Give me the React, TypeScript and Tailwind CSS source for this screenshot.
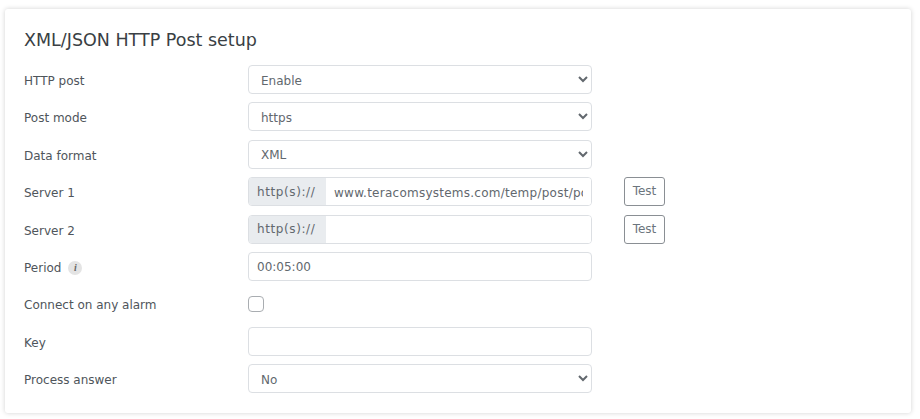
const fieldClass =
  "h-[29px] w-[344px] rounded-[4px] border border-[#dcdfe3] bg-white pt-[2px] text-[12px] text-[#62686e] outline-none";

const Label = ({ children }: { children: React.ReactNode }) => (
  <div className="w-[224px] shrink-0 pt-[3px] text-[12px] text-[#4f555b]">{children}</div>
);

const Row = ({ children }: { children: React.ReactNode }) => (
  <div className="flex h-[29px] items-center">{children}</div>
);

const SelectRow = ({ label, value }: { label: string; value: string }) => (
  <Row>
    <Label>{label}</Label>
    <select defaultValue={value} className={`${fieldClass} pl-2`}>
      <option>{value}</option>
    </select>
  </Row>
);

const ServerRow = ({ label, value }: { label: string; value: string }) => (
  <Row>
    <Label>{label}</Label>
    <div className="flex h-[29px] w-[344px] overflow-hidden rounded-[4px] border border-[#dcdfe3] bg-white">
      <span className="flex w-[77px] shrink-0 items-center bg-[#e9ecef] pl-2 text-[12px] tracking-[0.6px] text-[#62686e]">
        http(s)://
      </span>
      <input
        readOnly
        value={value}
        className="w-full min-w-0 bg-white px-2 pt-[2px] text-[12px] tracking-[0.25px] text-[#62686e] outline-none"
      />
    </div>
    <button className="ml-8 h-[29px] w-[41px] rounded-[3px] border border-[#8a8f94] bg-white pb-[1px] text-[12px] text-[#6c757d]">
      Test
    </button>
  </Row>
);

export default function App() {
  return (
    <div className="h-[419px] w-[920px] bg-white pt-[9px] pl-[5px] font-['DejaVu_Sans',sans-serif]">
      <div className="h-[404px] w-[906px] rounded-[3px] bg-white pt-[17px] pl-[19px] shadow-[0_0_5px_rgba(0,0,0,0.18)]">
        <h1 className="mb-[13px] h-[26px] pt-[1px] text-[17.5px] leading-[26px] text-[#3a3f44]">XML/JSON HTTP Post setup</h1>
        <div className="flex flex-col gap-[8.4px]">
          <SelectRow label="HTTP post" value="Enable" />
          <SelectRow label="Post mode" value="https" />
          <SelectRow label="Data format" value="XML" />
          <ServerRow label="Server 1" value="www.teracomsystems.com/temp/post/post.php" />
          <ServerRow label="Server 2" value="" />
          <Row>
            <Label>
              <span className="flex items-center gap-[7px]">
                Period
                <span className="flex h-[14px] w-[14px] items-center justify-center rounded-full bg-[#e4e4e4] text-[#666]">
                  <i className="font-['Liberation_Serif',serif] text-[10px] font-bold leading-none">i</i>
                </span>
              </span>
            </Label>
            <input readOnly value="00:05:00" className={`${fieldClass} px-2`} />
          </Row>
          <Row>
            <Label>Connect on any alarm</Label>
            <span className="h-4 w-4 rounded-[4px] border border-[#a9adb1] bg-white" />
          </Row>
          <Row>
            <Label>Key</Label>
            <input readOnly value="" className={`${fieldClass} px-2`} />
          </Row>
          <SelectRow label="Process answer" value="No" />
        </div>
      </div>
    </div>
  );
}
